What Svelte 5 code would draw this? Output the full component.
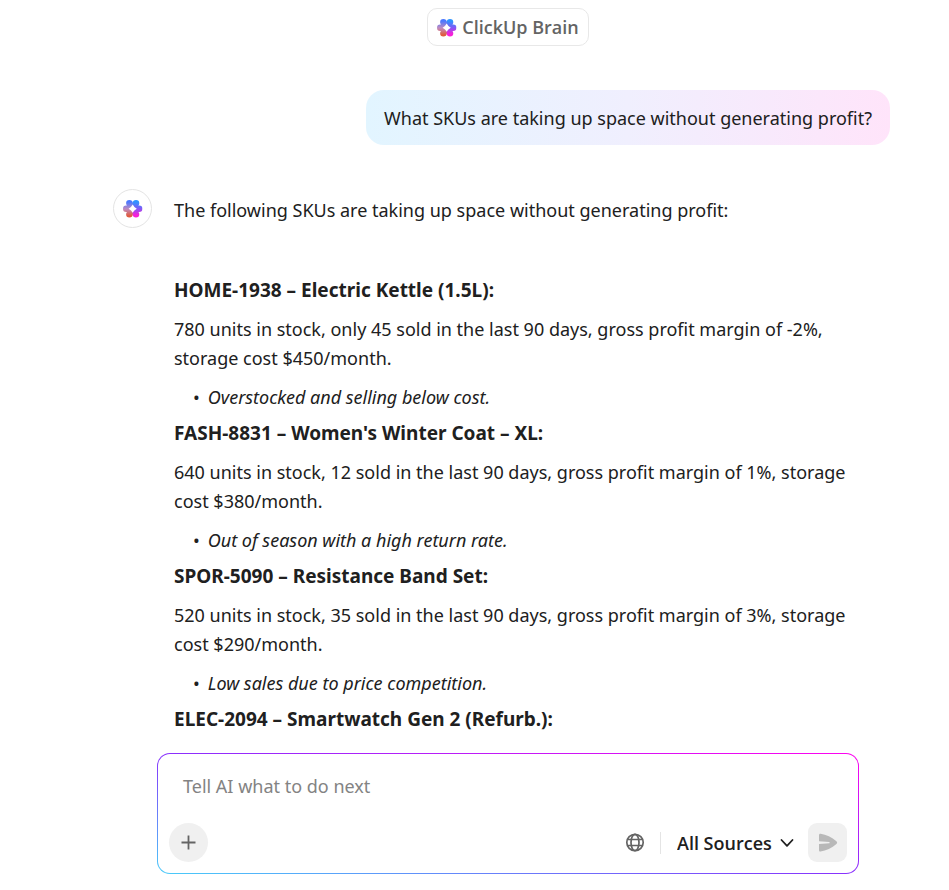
<script>
    let sources = ['All Sources'];
    let source = 'All Sources';
    let prompt = '';
    let question = 'What SKUs are taking up space without generating profit?';
    let items = [
        {
            title: 'HOME-1938 – Electric Kettle (1.5L):',
            text: '780 units in stock, only 45 sold in the last 90 days, gross profit margin of -2%, storage cost $450/month.',
            note: 'Overstocked and selling below cost.'
        },
        {
            title: "FASH-8831 – Women's Winter Coat – XL:",
            text: '640 units in stock, 12 sold in the last 90 days, gross profit margin of 1%, storage cost $380/month.',
            note: 'Out of season with a high return rate.'
        },
        {
            title: 'SPOR-5090 – Resistance Band Set:',
            text: '520 units in stock, 35 sold in the last 90 days, gross profit margin of 3%, storage cost $290/month.',
            note: 'Low sales due to price competition.'
        },
        { title: 'ELEC-2094 – Smartwatch Gen 2 (Refurb.):' }
    ];
    let petals = [
        [6.4, 4.2],
        [13, 4.2],
        [3.3, 9.7],
        [16.1, 9.7],
        [6.4, 15.2],
        [13, 15.2]
    ];
</script>

<style>
    :global(body) {
        background: #fff;
    }
    .chat {
        padding: 8px 59px 16px 113px;
        font-family: "Noto Sans", "Open Sans", sans-serif;
        font-size: 18px;
        line-height: 29px;
        color: #202020;
    }
    .top {
        display: flex;
        justify-content: center;
        padding: 0 31px 0 44px;
    }
    .brand {
        display: flex;
        align-items: center;
        gap: 5px;
        box-sizing: border-box;
        height: 38px;
        margin: 0;
        padding: 1px 9px 0;
        border: 1px solid #e8e8e8;
        border-radius: 10px;
        font-family: "Open Sans", sans-serif;
        font-size: 18px;
        font-weight: 600;
        color: #646464;
    }
    .question {
        width: fit-content;
        margin: 44px 0 44px auto;
        padding: 14px 18px 12px;
        border-radius: 18px;
        background: linear-gradient(90deg, #e2f5ff, #f0effe 50%, #ffe4fa);
    }
    .answer {
        display: flex;
        align-items: flex-start;
        gap: 22px;
    }
    .avatar {
        display: flex;
        align-items: center;
        justify-content: center;
        flex: none;
        box-sizing: border-box;
        width: 39px;
        height: 39px;
        border: 1px solid #e4e4e4;
        border-radius: 50%;
    }
    .content {
        flex: 1;
        padding: 7px 31px 0 0;
    }
    .content p {
        margin: 0;
    }
    .content .intro {
        margin-bottom: 51px;
    }
    .content h2 {
        margin: 0;
        font-size: 19px;
        font-weight: 700;
    }
    .content h2 + p {
        margin-top: 10px;
    }
    .content ul {
        margin: 10px 0 7px;
        padding: 0 0 0 19px;
        list-style: none;
    }
    .content li {
        display: flex;
        gap: 8px;
    }
    .content li::before {
        content: "•";
    }
    .composer {
        box-sizing: border-box;
        margin: 19px 31px 0 44px;
        padding: 18px 11px 11px;
        border: 1px solid transparent;
        border-radius: 13px;
        background:
            linear-gradient(#fff, #fff) padding-box,
            linear-gradient(to top right, #49ccf9, #8930fd 50%, #ff02f0) border-box;
    }
    .composer textarea {
        display: block;
        box-sizing: border-box;
        width: 100%;
        height: 29px;
        margin-bottom: 22px;
        padding: 0 14px;
        border: none;
        outline: none;
        resize: none;
        overflow: hidden;
        background: none;
        font: inherit;
        color: inherit;
    }
    .composer textarea::placeholder {
        color: #838383;
    }
    .tools {
        display: flex;
        align-items: center;
    }
    .tools button {
        display: flex;
        align-items: center;
        justify-content: center;
        width: 39px;
        height: 39px;
        padding: 0;
        border: none;
        background: #f0f0f0;
        cursor: pointer;
    }
    .tools .add {
        margin-right: auto;
        border-radius: 50%;
    }
    .tools .web {
        width: 20px;
        background: none;
    }
    .tools .send {
        border-radius: 9px;
    }
    .divider {
        width: 1px;
        height: 22px;
        margin: 0 16px 0 15px;
        background: #e4e4e4;
    }
    .sources {
        display: flex;
        align-items: center;
        gap: 8px;
        margin-right: 14px;
    }
    .sources select {
        appearance: none;
        padding: 1px 0 0;
        border: none;
        background: none;
        font-family: "Open Sans", sans-serif;
        font-size: 18px;
        font-weight: 600;
        line-height: 29px;
        color: #202020;
    }
    svg {
        display: block;
    }
</style>

{#snippet logo(id)}
    <svg width="20" height="20" viewBox="0 0 20 20" aria-hidden="true">
        <defs>
            <linearGradient id="{id}-left" x1="0" y1="0" x2="0" y2="1">
                <stop offset="0.15" stop-color="#4b78ff" />
                <stop offset="0.5" stop-color="#c08cc0" />
                <stop offset="0.85" stop-color="#e05a3c" />
            </linearGradient>
            <linearGradient id="{id}-right" x1="0" y1="0" x2="0" y2="1">
                <stop offset="0.15" stop-color="#2f94ff" />
                <stop offset="0.5" stop-color="#8656f4" />
                <stop offset="0.8" stop-color="#f81fd8" />
            </linearGradient>
            <clipPath id="{id}-petals">
                {#each petals as [x, y]}
                    <circle cx={x} cy={y} r="3.3" />
                {/each}
                <circle cx="9.7" cy="9.7" r="5.6" />
            </clipPath>
        </defs>
        <g clip-path="url(#{id}-petals)">
            <rect width="10" height="20" fill="url(#{id}-left)" />
            <rect x="9.7" width="10" height="20" fill="url(#{id}-right)" />
        </g>
        <path fill="#fff" d="M9.7 5.6Q11 8.4 13.8 9.7Q11 11 9.7 13.8Q8.4 11 5.6 9.7Q8.4 8.4 9.7 5.6Z" />
    </svg>
{/snippet}

<main class="chat">
    <header class="top">
        <h1 class="brand">{@render logo('brand')}ClickUp Brain</h1>
    </header>

    <div class="question">{question}</div>

    <section class="answer">
        <div class="avatar">{@render logo('avatar')}</div>
        <div class="content">
            <p class="intro">The following SKUs are taking up space without generating profit:</p>
            {#each items as item}
                <h2>{item.title}</h2>
                {#if item.text}
                    <p>{item.text}</p>
                    <ul>
                        <li><em>{item.note}</em></li>
                    </ul>
                {/if}
            {/each}
        </div>
    </section>

    <form class="composer" on:submit|preventDefault={() => (prompt = '')}>
        <textarea rows="1" aria-label="Prompt" placeholder="Tell AI what to do next" bind:value={prompt}></textarea>
        <div class="tools">
            <button class="add" type="button" aria-label="Add">
                <svg width="16" height="16" viewBox="0 0 16 16" fill="none" stroke="#646464" stroke-width="1.8">
                    <path d="M7.5 0.5V14.5M0.5 7.5H14.5" />
                </svg>
            </button>
            <button class="web" type="button" aria-label="Search the web">
                <svg width="20" height="20" viewBox="0 0 20 20" fill="none" stroke="#646464" stroke-width="1.7">
                    <circle cx="10" cy="9.5" r="8.2" />
                    <ellipse cx="10" cy="9.5" rx="4" ry="8.2" />
                    <path d="M2.6 6.5H17.4M2.6 12.5H17.4" />
                </svg>
            </button>
            <span class="divider"></span>
            <label class="sources">
                <select aria-label="Sources" bind:value={source}>
                    {#each sources as s}
                        <option>{s}</option>
                    {/each}
                </select>
                <svg width="14" height="10" viewBox="0 0 14 10" fill="none" stroke="#202020" stroke-width="1.8" stroke-linecap="round" stroke-linejoin="round">
                    <path d="M1.5 2L7 7.8L12.5 2" />
                </svg>
            </label>
            <button class="send" type="submit" aria-label="Send">
                <svg width="20" height="20" viewBox="0 0 20 20" fill="#b8b8b8">
                    <path d="M1 2.2C1 1.3 1.6 0.6 2.6 0.8C8 1.6 14 4.400 18.400 8.300C19.400 9.200 19.400 10 18.400 10.900C14 14.800 8 17.500 2.600 18.400C1.600 18.600 1 18 1 17.200V11L11.500 10.300V8.900L1 8.200Z" />
                </svg>
            </button>
        </div>
    </form>
</main>
